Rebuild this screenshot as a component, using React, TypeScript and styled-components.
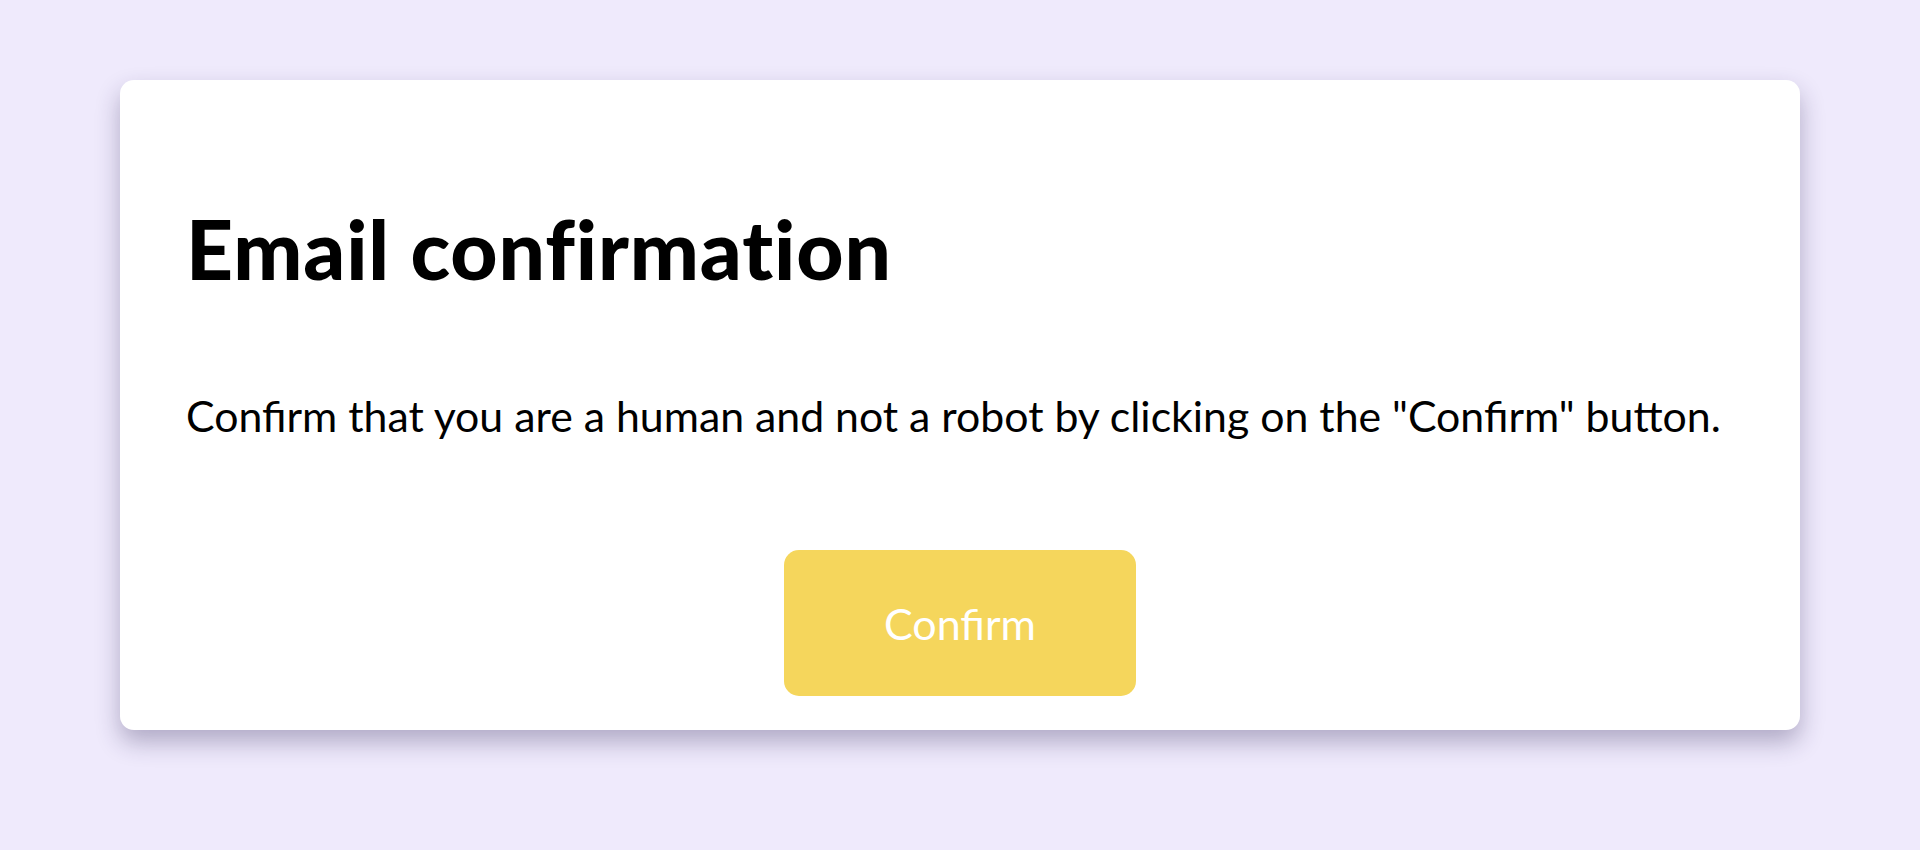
import * as React from 'react';
import styled, { createGlobalStyle } from 'styled-components';

const GlobalStyle = createGlobalStyle`
  html, body {
    margin: 0;
    padding: 0;
    background: #efeafc;
    font-family: Lato, 'Noto Sans', sans-serif;
  }
`;

const App: React.FC = () => {
  return (
    <>
      <GlobalStyle />
      <Page>
        <Card>
          <Title>Email confirmation</Title>
          <Description>
            Confirm that you are a human and not a robot by clicking on the
            "Confirm" button.
          </Description>
          <Actions>
            <ConfirmButton type="button">Confirm</ConfirmButton>
          </Actions>
        </Card>
      </Page>
    </>
  );
};

const Page = styled.main`
  min-height: 850px;
  box-sizing: border-box;
  padding: 80px 120px 120px;
`;

const Card = styled.section`
  display: flex;
  flex-direction: column;
  height: 650px;
  box-sizing: border-box;
  padding: 127px 66px 34px;
  background: #ffffff;
  border-radius: 14px;
  box-shadow: 0 12px 24px rgba(45, 35, 85, 0.32);
`;

const Title = styled.h1`
  margin: 0;
  font-size: 82px;
  line-height: 1;
  font-weight: 900;
  letter-spacing: 0.9px;
  color: #000000;
`;

const Description = styled.p`
  margin: 101px 0 0;
  font-size: 42.8px;
  line-height: 1.2;
  color: #000000;
`;

const Actions = styled.div`
  display: flex;
  justify-content: center;
  margin-top: auto;
`;

const ConfirmButton = styled.button`
  width: 352px;
  height: 146px;
  border: none;
  border-radius: 15px;
  background: #f5d65c;
  color: #ffffff;
  font-family: Lato, 'Noto Sans', sans-serif;
  font-size: 43px;
  cursor: pointer;
`;

export default App;
